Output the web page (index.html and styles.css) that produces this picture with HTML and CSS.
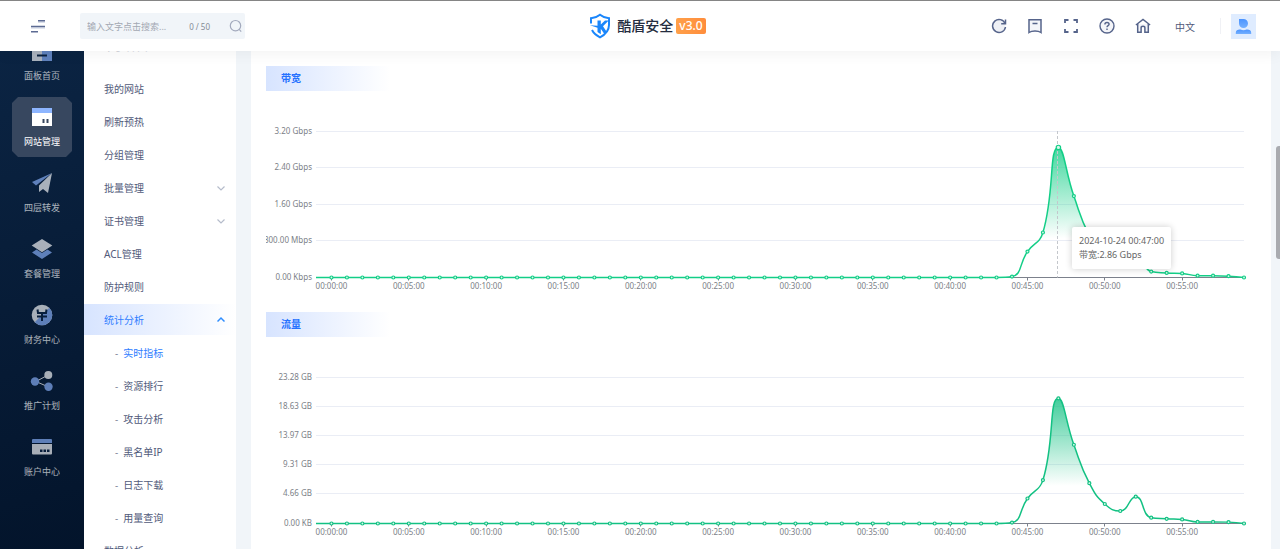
FILE: index.html
```html
<!DOCTYPE html>
<html lang="zh-CN">
<head>
<meta charset="utf-8">
<meta name="viewport" content="width=device-width, initial-scale=1">
<title>酷盾安全</title>
<link rel="stylesheet" href="styles.css">
</head>
<body>
<header class="topbar">
  <div class="topbar-left">
    <button class="icon-button fold" aria-label="折叠菜单">
      <svg width="16" height="16" viewBox="0 0 16 16" stroke="#5d6b93" stroke-width="1.500" fill="none"><path d="M8 4.200h7M1 10h14" stroke="#d9deea"/><path d="M8 2.700h7M1 8.500h14M1 13.700h7"/></svg>
    </button>
    <form class="search">
      <input class="search-input" type="text" maxlength="50" placeholder="输入文字点击搜索..." aria-label="搜索">
      <span class="search-count">0 / 50</span>
      <button class="icon-button" type="button" aria-label="搜索">
        <svg width="14" height="14" viewBox="0 0 14 14" fill="none" stroke="#a3aabd" stroke-width="1.200"><circle cx="6.500" cy="6.700" r="5.200"/><path d="M10.200 10.400l2 2.200"/></svg>
      </button>
    </form>
  </div>
  <a class="brand" href="#">
    <svg width="22" height="26" viewBox="0 0 22 26" fill="none">
      <path d="M2 10.500V5.300C6 5 8.500 3.900 11 1.800c2.500 2.100 5 3.200 9 3.500v6.700c0 5.500-3.500 9.500-9 12.300-3.800-2-6.500-4.300-8-7.300" stroke="#1a86fb" stroke-width="2"/>
      <path d="M8.500 7.500h3.300v4l4.200-4h3.700l-5.700 5.700 3.500 5.300-2.300 2.300-3.400-5v5.400L8.500 19v-4.200L1 12.200l7.500.6z" fill="#1a86fb"/>
    </svg>
    <span class="brand-name">酷盾安全</span>
    <span class="brand-version">v3.0</span>
  </a>
  <div class="topbar-right">
    <div class="tools">
      <button class="icon-button" aria-label="刷新"><svg width="16" height="16" viewBox="0 0 16 16" fill="#eef0f5" stroke="#56648b" stroke-width="1.500"><path d="M14.100 5.500A6.500 6.500 0 1 0 14.500 9"/><path d="M14.500 1.500v4.200h-4.300" fill="none"/></svg></button>
      <button class="icon-button" aria-label="文档"><svg width="16" height="16" viewBox="0 0 16 16" fill="#f4f5f9" stroke="#56648b" stroke-width="1.500"><path d="M2 1.700h12v12.800c-3-2-9-2-12 0z"/><path d="M5.500 5.500h5"/></svg></button>
      <button class="icon-button" aria-label="全屏"><svg width="16" height="16" viewBox="0 0 16 16" fill="none" stroke="#56648b" stroke-width="1.800"><path d="M2 5V2h3.500M10.500 2H14v3M14 11v3h-3.500M5.500 14H2v-3"/></svg></button>
      <button class="icon-button" aria-label="帮助"><svg width="16" height="16" viewBox="0 0 16 16" fill="#f4f5f9" stroke="#56648b" stroke-width="1.400"><circle cx="8" cy="8" r="7"/><path d="M5.900 6.500c0-1.200.9-2 2.100-2s2.100.8 2.100 1.800c0 1.300-2.100 1.500-2.100 3M8 10.500V12" fill="none"/></svg></button>
      <button class="icon-button" aria-label="主页"><svg width="16" height="16" viewBox="0 0 16 16" fill="#f4f5f9" stroke="#56648b" stroke-width="1.500"><path d="M.9 7L8 1.500 15.100 7" fill="none"/><path d="M2.700 6v8.200h3.400V9.800c0-1 .8-1.500 1.900-1.500s1.900.5 1.900 1.500v4.400h3.400V6"/></svg></button>
    </div>
    <button class="lang">中文</button>
    <span class="divider"></span>
    <button class="avatar" aria-label="用户">
      <svg width="17" height="17" viewBox="0 0 17 17"><defs><linearGradient id="person" x1="0" y1="0" x2="0" y2="1"><stop offset="0" stop-color="#4b94ff"/><stop offset="1" stop-color="#74b0ff"/></linearGradient></defs><path d="M4 1h4.500A4.500 4.500 0 1 1 4 5.500z" fill="url(#person)"/><path d="M.8 16v-1.300c0-2.300 1.700-3.300 4-3.300h.7c1.800 1 4.200 1 6 0h.7c2.300 0 4 1 4 3.300V16z" fill="url(#person)"/></svg>
    </button>
  </div>
</header>

<div class="layout">
  <nav class="rail" aria-label="主导航">
    <a class="rail-item" href="#"><svg class="rail-icon" viewBox="0 0 20 20"><path fill="#fff" d="M0 0h10v20H0z"/><path fill="#8db5ff" d="M10 0h10v20H10z"/><path d="M5 14.500h10" stroke="#0a2140" stroke-width="2"/></svg><span>面板首页</span></a>
    <a class="rail-item is-active" href="#"><svg class="rail-icon" viewBox="0 0 20 20"><path fill="#fff" d="M0 1h20v18H0z"/><path fill="#8db5ff" d="M0 1h20v5H0z"/><path d="M11.500 12v4M15.500 12v4" stroke="#37475f" stroke-width="2"/></svg><span>网站管理</span></a>
    <a class="rail-item" href="#"><svg class="rail-icon" viewBox="0 0 20 20"><path fill="#8db5ff" d="M20 0L0 9l4 3.500z"/><path fill="#fff" d="M20 0L7 12.500V19l4-3 5 4z"/></svg><span>四层转发</span></a>
    <a class="rail-item" href="#"><svg class="rail-icon" viewBox="0 0 20 20"><path fill="#8db5ff" d="M0 13.500l4.500-3L10 14l5.500-3.500 4.500 3L10 20z"/><path fill="#fff" d="M10 0l10.300 6.500L10 13.300-.3 6.500z"/></svg><span>套餐管理</span></a>
    <a class="rail-item" href="#"><svg class="rail-icon" viewBox="0 0 20 20"><circle cx="10" cy="10" r="10.300" fill="#fff"/><path fill="#8db5ff" d="M17.300 2.700A10.300 10.300 0 0 1 2.700 17.300z"/><path d="M5.500 4.500L6 8h8l.5-3.500M5 11.500h10M10 8v8" stroke="#0a2140" stroke-width="2" fill="none"/></svg><span>财务中心</span></a>
    <a class="rail-item" href="#"><svg class="rail-icon" viewBox="0 0 20 20"><path d="M16 4L4 10.500l12.500 5.500" stroke="#fff" fill="none"/><circle cx="16.300" cy="4" r="4" fill="#fff"/><circle cx="3" cy="10.500" r="4.200" fill="#8db5ff"/><circle cx="16.500" cy="15.800" r="4.200" fill="#8db5ff"/></svg><span>推广计划</span></a>
    <a class="rail-item" href="#"><svg class="rail-icon" viewBox="0 0 20 20"><path fill="#8db5ff" d="M0 2.500Q0 2 1 2h18q1 0 1 .5V6H0z"/><path fill="#fff" d="M0 7h20v9.500q0 1-1 1H1q-1 0-1-1z"/><path d="M8 13.700h10" stroke="#0a2140" stroke-width="2.500" stroke-dasharray="2.500 1"/></svg><span>账户中心</span></a>
  </nav>

  <nav class="menu" aria-label="网站管理">
    <p class="menu-title">网站管理</p>
    <a class="menu-item" href="#">我的网站</a>
    <a class="menu-item" href="#">刷新预热</a>
    <a class="menu-item" href="#">分组管理</a>
    <a class="menu-item" href="#">批量管理<svg class="chevron" viewBox="0 0 8 8"><path d="M.5 2.500L4 6l3.500-3.500"/></svg></a>
    <a class="menu-item" href="#">证书管理<svg class="chevron" viewBox="0 0 8 8"><path d="M.5 2.500L4 6l3.500-3.500"/></svg></a>
    <a class="menu-item" href="#">ACL管理</a>
    <a class="menu-item" href="#">防护规则</a>
    <a class="menu-item is-open" href="#">统计分析<svg class="chevron" viewBox="0 0 8 8"><path d="M.5 5.500L4 2l3.500 3.500"/></svg></a>
    <a class="menu-item sub is-current" href="#">实时指标</a>
    <a class="menu-item sub" href="#">资源排行</a>
    <a class="menu-item sub" href="#">攻击分析</a>
    <a class="menu-item sub" href="#">黑名单IP</a>
    <a class="menu-item sub" href="#">日志下载</a>
    <a class="menu-item sub" href="#">用量查询</a>
    <a class="menu-item" href="#">数据分析<svg class="chevron" viewBox="0 0 8 8"><path d="M.5 2.500L4 6l3.500-3.500"/></svg></a>
  </nav>

  <main class="content">
    <section class="panel">
      <h2 class="panel-title">带宽</h2>
      <div class="chart">
        <svg class="chart-canvas" id="bandwidth" role="img" aria-label="带宽"></svg>
        <div class="tooltip" id="tooltip">2024-10-24 00:47:00<br>带宽:2.86 Gbps</div>
      </div>
    </section>
    <section class="panel">
      <h2 class="panel-title">流量</h2>
      <div class="chart">
        <svg class="chart-canvas" id="traffic" role="img" aria-label="流量"></svg>
      </div>
    </section>
  </main>
  <span class="scroll-thumb"></span>
</div>
<script src="charts.js"></script>
</body>
</html>
```

FILE: styles.css
```css
* {
  box-sizing: border-box;
}

body {
  display: flex;
  flex-direction: column;
  height: 100vh;
  margin: 0;
  overflow: hidden;
  background: #f1f5f9;
  color: #515a7a;
  font-family: "Noto Sans", "Noto Sans CJK SC", sans-serif;
  font-size: 10px;
}

a {
  color: inherit;
  text-decoration: none;
}

button {
  padding: 0;
  border: 0;
  background: none;
  color: inherit;
  font: inherit;
}

.icon-button {
  display: flex;
}

/* Top bar */
.topbar {
  position: relative;
  z-index: 2;
  display: grid;
  grid-template-columns: 1fr auto 1fr;
  align-items: center;
  flex: none;
  height: 51px;
  padding: 0 24px 0 30px;
  border-top: 1px solid #858585;
  background: #fff;
  box-shadow: 0 3px 14px rgba(0, 0, 0, 0.05);
}

.topbar-left,
.topbar-right,
.tools,
.brand,
.search {
  display: flex;
  align-items: center;
}

.topbar-left {
  gap: 34px;
}

.search {
  width: 165px;
  height: 26px;
  padding: 0 2px 0 7px;
  border-radius: 2px;
  background: #f1f5f9;
}

.search-input {
  flex: 1;
  min-width: 0;
  padding: 0;
  border: 0;
  outline: 0;
  background: none;
  font: inherit;
  font-size: 9px;
}

.search-input::placeholder {
  color: #a3a8b3;
}

.search-count {
  margin-right: 19px;
  color: #858b96;
  font-size: 8px;
}

.brand {
  gap: 3px;
  margin-left: 9px;
}

.brand-name {
  padding-left: 3px;
  color: #252d40;
  font-size: 14px;
  font-weight: 500;
  line-height: 20px;
}

.brand-version {
  padding: 0 3px;
  border-radius: 2px;
  background: linear-gradient(90deg, #ffa04a, #ff8d3c);
  color: #fff;
  font-size: 12px;
  font-weight: 500;
  line-height: 16px;
}

.topbar-right {
  justify-content: flex-end;
}

.tools {
  gap: 20px;
}

.lang {
  margin: 0 25px 0 24px;
}

.divider {
  width: 1px;
  height: 16px;
  margin-right: 10px;
  background: #f0f1f5;
}

.avatar {
  display: grid;
  place-items: center;
  width: 25px;
  height: 25px;
  background: #dfecff;
}

/* Page columns */
.layout {
  position: relative;
  display: flex;
  flex: 1;
  min-height: 0;
}

.rail,
.menu,
.content {
  overflow: hidden;
}

.rail {
  display: flex;
  flex: none;
  flex-direction: column;
  align-items: center;
  gap: 6px;
  width: 84px;
  background: linear-gradient(165deg, #0b2443, #03142b);
}

.rail-item {
  display: flex;
  flex: none;
  flex-direction: column;
  align-items: center;
  gap: 8px;
  width: 60px;
  height: 60px;
  padding-top: 10px;
  color: #fff;
  font-size: 9px;
  line-height: 14px;
}

.rail-item:first-child {
  margin-top: -20px;
}

.rail-item > * {
  opacity: 0.65;
}

.rail-item.is-active {
  background: #37475f;
  clip-path: polygon(6px 0, calc(100% - 6px) 0, 100% 6px, 100% calc(100% - 6px), calc(100% - 6px) 100%, 6px 100%, 0 calc(100% - 6px), 0 6px);
}

.rail-item.is-active > * {
  opacity: 1;
}

.rail-icon {
  width: 20px;
  height: 20px;
  overflow: visible;
}

.menu {
  display: flex;
  flex: none;
  flex-direction: column;
  gap: 2px;
  width: 152px;
  background: #fff;
}

.menu-title {
  flex: none;
  margin: -22px 0 11px;
  padding-left: 23px;
  color: #d5d7dd;
  font-size: 14px;
  line-height: 31px;
}

.menu-item {
  display: flex;
  flex: none;
  align-items: center;
  justify-content: space-between;
  height: 31px;
  padding: 0 11px 0 20px;
}

.menu-item.is-open {
  background: linear-gradient(90deg, #d7e4ff, #fff);
  color: #2f7dff;
}

.menu-item.sub {
  justify-content: flex-start;
  gap: 5px;
  padding-left: 31px;
}

.menu-item.sub::before {
  content: "-";
  color: #858b9c;
}

.menu-item.is-current {
  color: #2f7dff;
}

.chevron {
  width: 8px;
  height: 8px;
  fill: none;
  stroke: #b5bccb;
  stroke-width: 1.2;
}

.is-open .chevron {
  stroke: #2f8dff;
  stroke-width: 1.5;
}

.content {
  display: flex;
  flex: 1;
  flex-direction: column;
  gap: 16px;
  min-width: 0;
  margin: 0 9px 0 15px;
  padding: 15px;
  background: #fff;
}

.panel-title {
  width: 124px;
  margin: 0;
  padding-left: 15px;
  background: linear-gradient(90deg, #d7e4ff, #fff);
  color: #2672ff;
  font-size: 10px;
  line-height: 25px;
}

/* Charts */
.chart {
  position: relative;
}

.chart-canvas {
  display: block;
  width: 100%;
  height: 205px;
  overflow: hidden;
}

.chart-canvas text {
  fill: #7c7f88;
  font-size: 8px;
}

.grid-line {
  stroke: #eaedf5;
}

.axis {
  fill: none;
  stroke: #7c818c;
}

.pointer {
  stroke: #c4c7cc;
  stroke-dasharray: 3 2;
}

.series {
  fill: none;
  stroke-width: 1.5;
}

.marker {
  fill: #d8f7ea;
  stroke-width: 1.2;
}

.tooltip {
  position: absolute;
  padding: 7px;
  border-radius: 2px;
  background: #fff;
  box-shadow: 0 0 7px rgba(0, 0, 0, 0.2);
  color: #666;
  font-size: 9px;
  line-height: 14px;
  white-space: nowrap;
}

.scroll-thumb {
  position: absolute;
  top: 95px;
  right: 0;
  width: 4px;
  height: 113px;
  border-radius: 3px 0 0 3px;
  background: #a9abb0;
}
```

FILE: charts.js
```js
const PLOT = { left: 50, right: 12, top: 40, bottom: 185.5 };
const NS = "http://www.w3.org/2000/svg";
const idle = Array(44).fill(0);

const charts = [
  {
    id: "bandwidth", color: "#13ce87", max: 3.2, highlight: 47,
    ticks: ["0.00 Kbps", "800.00 Mbps", "1.60 Gbps", "2.40 Gbps", "3.20 Gbps"],
    values: [...idle, 0.02, 0.57, 0.99, 2.86, 1.79, 0.92, 0.45, 0.28, 0.61, 0.13, 0.1, 0.09, 0.04, 0.04, 0.03, 0]
  },
  {
    id: "traffic", color: "#13c183", max: 23.28,
    ticks: ["0.00 KB", "4.66 GB", "9.31 GB", "13.97 GB", "18.63 GB", "23.28 GB"],
    values: [...idle, 0.15, 4, 6.95, 20.03, 12.6, 6.46, 3.12, 2, 4.3, 0.93, 0.75, 0.65, 0.25, 0.25, 0.22, 0]
  }
];

const clamp = (v, a, b) => Math.max(Math.min(a, b), Math.min(Math.max(a, b), v));

// Cubic path whose control points never leave the range of their segment.
function smoothPath(pts) {
  let d = `M${pts[0]}`;
  let out = pts[0];
  for (let i = 1; i < pts.length; i++) {
    const prev = pts[i - 1], p = pts[i], next = pts[i + 1];
    let cp = p, nextOut = p;
    if (next) {
      const lp = Math.hypot(p[0] - prev[0], p[1] - prev[1]);
      const ln = Math.hypot(next[0] - p[0], next[1] - p[1]);
      const r = ln / (ln + lp);
      nextOut = [0, 1].map(k => clamp(p[k] + (next[k] - prev[k]) * 0.5 * r, p[k], next[k]));
      cp = [0, 1].map(k => clamp(p[k] - (nextOut[k] - p[k]) * lp / ln, prev[k], p[k]));
      nextOut = [0, 1].map(k => p[k] + (p[k] - cp[k]) * ln / lp);
    }
    d += `C${out} ${cp} ${p}`;
    out = nextOut;
  }
  return d;
}

function add(svg, tag, attrs, text) {
  const el = document.createElementNS(NS, tag);
  for (const key in attrs) el.setAttribute(key, attrs[key]);
  if (text) el.textContent = text;
  svg.append(el);
  return el;
}

function draw(chart) {
  const svg = document.getElementById(chart.id);
  const right = svg.clientWidth - PLOT.right;
  const step = (right - PLOT.left) / 60;
  const height = PLOT.bottom - PLOT.top;
  const base = Math.round(PLOT.bottom) + 0.5;
  const pts = [0, ...chart.values].map((v, i) => [PLOT.left + i * step, base - v / chart.max * height]);
  svg.replaceChildren();

  const gradient = add(svg, "linearGradient", { id: chart.id + "-fill", x1: 0, y1: 0, x2: 0, y2: 1 });
  add(gradient, "stop", { offset: 0, "stop-color": chart.color, "stop-opacity": 0.8 });
  add(gradient, "stop", { offset: 0.7, "stop-color": chart.color, "stop-opacity": 0 });

  chart.ticks.forEach((label, i) => {
    const y = Math.round(PLOT.bottom - i * height / (chart.ticks.length - 1)) + 0.5;
    if (i) add(svg, "line", { class: "grid-line", x1: PLOT.left, x2: right, y1: y, y2: y });
    add(svg, "text", { x: PLOT.left - 4, y: y + 2, "text-anchor": "end" }, label);
  });

  let axis = `M${PLOT.left} ${base}H${right}`;
  for (let m = 0; m < 60; m += 5) {
    const x = pts[m + 1][0];
    axis += `M${Math.floor(x) + 0.5} ${base}v3`;
    add(svg, "text", { x, y: PLOT.bottom + 12, "text-anchor": "middle" }, `00:${String(m).padStart(2, "0")}:00`);
  }
  add(svg, "path", { class: "axis", d: axis });

  const line = smoothPath(pts);
  add(svg, "path", { d: `${line}V${base}H${PLOT.left}Z`, fill: `url(#${chart.id}-fill)` });
  if (chart.highlight) {
    const [x, y] = pts[chart.highlight + 1];
    const px = Math.floor(x) - 0.5;
    add(svg, "line", { class: "pointer", x1: px, x2: px, y1: PLOT.top, y2: base });
    const tip = document.getElementById("tooltip");
    tip.style.left = `${Math.floor(x) + 14}px`;
    tip.style.top = `${Math.round(y) + 80}px`;
  }
  add(svg, "path", { class: "series", d: line, stroke: chart.color });
  pts.slice(1).forEach(([cx, cy], i) => {
    add(svg, "circle", { class: "marker", cx, cy, r: i === chart.highlight ? 2.2 : 1.5, stroke: chart.color });
  });
}

const drawAll = () => charts.forEach(draw);
drawAll();
addEventListener("resize", drawAll);
```
